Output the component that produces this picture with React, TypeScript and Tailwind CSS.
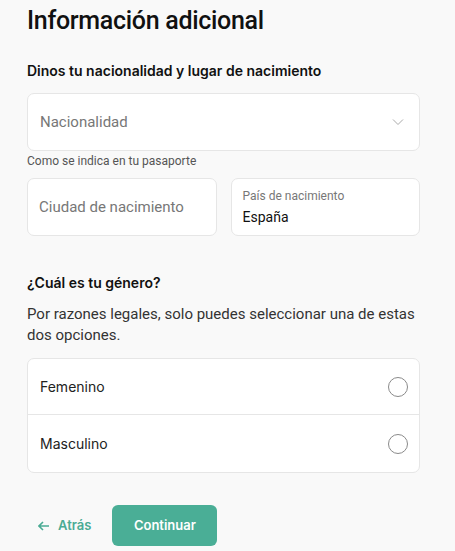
import React from "react";

export default function App() {
  return (
    <div className="min-h-[551px] w-[455px] bg-[#f9f9f9] font-['Inter','Roboto',sans-serif] text-[#1a1a1a]">
      <div className="pl-[27px] pr-[35px] pt-[5px]">
        <h1 className="font-['Roboto',sans-serif] text-[25px] leading-[32px] font-medium tracking-[-0.3px] text-[#111]">Información adicional</h1>
        <h2 className="mt-[25px] text-[14px] leading-[18px] font-semibold text-[#111]">Dinos tu nacionalidad y lugar de nacimiento</h2>

        <div className="mt-[13px] flex h-[58px] items-center justify-between rounded-[7px] border border-[#e6e6e6] bg-white pl-[12px] pr-[15px]">
          <span className="font-['Roboto',sans-serif] text-[15px] text-[#777]">Nacionalidad</span>
          <svg width="12" height="8" viewBox="0 0 12 8" fill="none">
            <path d="M1 1.5L6 6.5L11 1.5" stroke="#aaa" strokeWidth="1" />
          </svg>
        </div>
        <p className="mt-[3px] font-['Roboto',sans-serif] text-[12px] leading-[15px] text-[#555]">Como se indica en tu pasaporte</p>

        <div className="mt-[9px] grid grid-cols-2 gap-[14px]">
          <div className="flex h-[58px] items-center rounded-[7px] border border-[#e6e6e6] bg-white pl-[11px]">
            <span className="font-['Roboto',sans-serif] text-[15px] text-[#777]">Ciudad de nacimiento</span>
          </div>
          <div className="flex h-[58px] flex-col justify-center rounded-[7px] border border-[#e6e6e6] bg-white pl-[11px]">
            <span className="font-['Roboto',sans-serif] text-[12px] leading-[15px] text-[#777]">País de nacimiento</span>
            <span className="mt-[5px] font-['Roboto',sans-serif] text-[14px] leading-[16px] text-[#111]">España</span>
          </div>
        </div>

        <h2 className="mt-[38px] text-[14px] leading-[18px] font-semibold text-[#111]">¿Cuál es tu género?</h2>
        <p className="mt-[12px] font-['Roboto',sans-serif] text-[15px] leading-[21px] text-[#333]">
          Por razones legales, solo puedes seleccionar una de estas dos opciones.
        </p>

        <div className="mt-[12px] rounded-[7px] border border-[#e6e6e6] bg-white">
          <div className="flex h-[56px] items-center justify-between border-b border-[#e6e6e6] pl-[12px] pr-[11px]">
            <span className="text-[14px] text-[#222]">Femenino</span>
            <span className="h-[20px] w-[20px] rounded-full border border-[#8a8a8a]" />
          </div>
          <div className="flex h-[57px] items-center justify-between pl-[12px] pr-[11px]">
            <span className="text-[14px] text-[#222]">Masculino</span>
            <span className="h-[20px] w-[20px] rounded-full border border-[#8a8a8a]" />
          </div>
        </div>

        <div className="mt-[32px] flex items-center gap-[21px] pl-[11px]">
          <button className="flex items-center gap-[8px] text-[13px] font-semibold text-[#4aab94]">
            <svg width="12" height="10" viewBox="0 0 12 10" fill="none">
              <path d="M11 5H1.5M5 1L1 5L5 9" stroke="#4aab94" strokeWidth="1.6" />
            </svg>
            Atrás
          </button>
          <button className="flex h-[41px] w-[105px] items-center justify-center rounded-[6px] bg-[#4aae96] text-[13px] font-semibold text-white">
            Continuar
          </button>
        </div>
      </div>
    </div>
  );
}
